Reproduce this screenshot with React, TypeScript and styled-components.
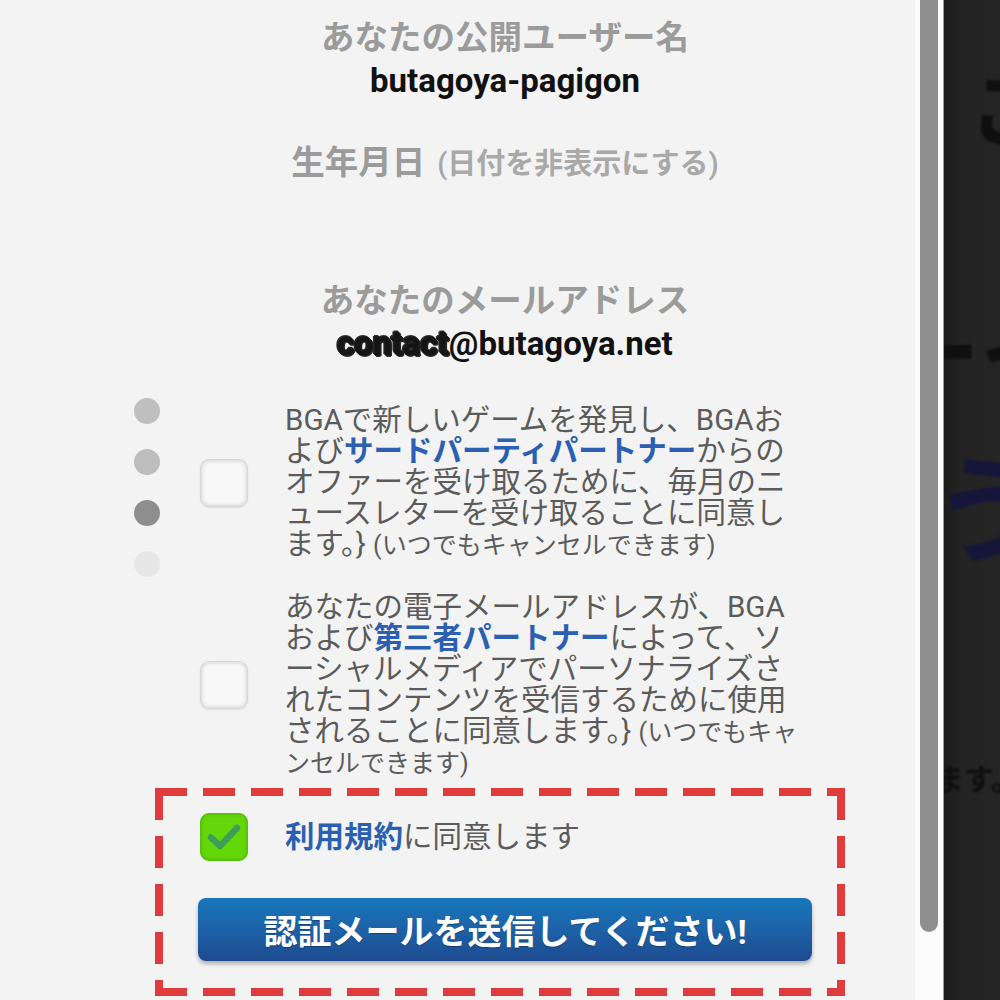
import React, { FC } from 'react';
import styled, { createGlobalStyle } from 'styled-components';

const BASE_FONT = `Roboto, "Noto Sans CJK JP", sans-serif`;

const GlobalStyle = createGlobalStyle`
    html, body {
        margin: 0;
        padding: 0;
        background: #f3f3f3;
        overflow: hidden;
    }
    body {
        font-family: ${BASE_FONT};
    }
`;

const dotShades = ['#c0c0c0', '#bdbdbd', '#8e8e8e', '#e7e7e7'];

const CheckMark: FC = () => (
    <svg width="40" height="40" viewBox="0 0 40 40">
        <path d="M7 20.5 L16 29 L33 11" fill="none" stroke="#3c9e57" strokeWidth="6.5" strokeLinecap="round" strokeLinejoin="round" />
    </svg>
);

const App: FC = () => {
    return (
        <>
            <GlobalStyle />
            <Screen>
                <Panel>
                    <PageDots>
                        {dotShades.map((shade, i) => (
                            <Dot key={i} $shade={shade} />
                        ))}
                    </PageDots>
                    <Column>
                        <FieldLabel>あなたの公開ユーザー名</FieldLabel>
                        <FieldValue>butagoya-pagigon</FieldValue>
                        <FieldLabel $gap={39}>
                            生年月日<Hint>(日付を非表示にする)</Hint>
                        </FieldLabel>
                        <FieldLabel $gap={93}>あなたのメールアドレス</FieldLabel>
                        <FieldValue>
                            <Scribble>contact</Scribble>@butagoya.net
                        </FieldValue>

                        <ConsentRow $gap={40}>
                            <CheckBox />
                            <ConsentText>
                                BGAで新しいゲームを発見し、BGAお<br />
                                よび<Link>サードパーティパートナー</Link>からの<br />
                                オファーを受け取るために、毎月のニ<br />
                                ュースレターを受け取ることに同意し<br />
                                {'ます。} '}<Aside>(いつでもキャンセルできます)</Aside>
                            </ConsentText>
                        </ConsentRow>

                        <ConsentRow $gap={32}>
                            <CheckBox />
                            <ConsentText>
                                あなたの電子メールアドレスが、BGA<br />
                                および<Link>第三者パートナー</Link>によって、ソ<br />
                                ーシャルメディアでパーソナライズさ<br />
                                れたコンテンツを受信するために使用<br />
                                {'されることに同意します。} '}<Aside>(いつでもキャ</Aside><br />
                                <Aside>ンセルできます)</Aside>
                            </ConsentText>
                        </ConsentRow>

                        <Highlight>
                            <ConsentRow>
                                <CheckBox $checked>
                                    <CheckMark />
                                </CheckBox>
                                <ConsentText>
                                    <Link>利用規約</Link>に同意します
                                </ConsentText>
                            </ConsentRow>
                            <SubmitButton>認証メールを送信してください!</SubmitButton>
                        </Highlight>
                    </Column>
                </Panel>

                <ScrollTrack>
                    <ScrollThumb />
                </ScrollTrack>

                {/* page behind the sheet, mostly hidden */}
                <Backdrop>
                    <BackdropLine $size={84} $top={70} $shift={26}>ご</BackdropLine>
                    <BackdropLine $size={92} $top={156} $shift={-56}>ーイ</BackdropLine>
                    <BackdropLine $size={116} $top={53} $shift={-12} $color="#15153a">う</BackdropLine>
                    <BackdropLine $size={30} $top={194} $shift={-10}>ます。</BackdropLine>
                </Backdrop>
            </Screen>
        </>
    );
};

const Screen = styled.div`
    display: flex;
    width: 1000px;
    height: 1000px;
    overflow: hidden;
`;

const Panel = styled.div`
    position: relative;
    width: 915px;
    flex-shrink: 0;
    background: #f3f3f3;
`;

const PageDots = styled.div`
    position: absolute;
    left: 134px;
    top: 398px;
    display: flex;
    flex-direction: column;
    gap: 25px;
`;

const Dot = styled.div<{ $shade: string }>`
    width: 26px;
    height: 26px;
    border-radius: 50%;
    background: ${(p) => p.$shade};
`;

const Column = styled.div`
    margin-left: 198px;
    width: 614px;
    padding-top: 16px;
    display: flex;
    flex-direction: column;
`;

const FieldLabel = styled.div<{ $gap?: number }>`
    margin-top: ${(p) => p.$gap ?? 0}px;
    text-align: center;
    font-size: 33.5px;
    line-height: 43px;
    font-weight: 700;
    color: #9b9b9b;
    white-space: nowrap;
`;

const Hint = styled.span`
    margin-left: 12px;
    font-size: 29px;
    font-weight: 600;
    color: #a9a9a9;
`;

const FieldValue = styled.div`
    text-align: center;
    font-size: 33px;
    line-height: 43px;
    font-weight: 700;
    color: #111;
`;

const Scribble = styled.span`
    color: #151515;
    text-shadow: 1px 0 #1c1c1c, -1px 0 #1c1c1c, 0 1px #1c1c1c, 0 -1px #1c1c1c,
        2px 1px #2a2a2a, -2px -1px #2a2a2a, 1px 2px #333, -1px -2px #333;
    filter: blur(0.6px);
`;

const ConsentRow = styled.div<{ $gap?: number }>`
    margin-top: ${(p) => p.$gap ?? 0}px;
    display: flex;
    align-items: center;
    gap: 37px;
`;

const CheckBox = styled.div<{ $checked?: boolean }>`
    width: 48px;
    height: 48px;
    margin-left: 2px;
    flex-shrink: 0;
    box-sizing: border-box;
    border-radius: 9px;
    display: flex;
    align-items: center;
    justify-content: center;
    background: ${(p) => (p.$checked ? '#63d70a' : '#f8f8f8')};
    border: 1px solid ${(p) => (p.$checked ? '#55c012' : '#d6d6d6')};
    box-shadow: ${(p) =>
        p.$checked
            ? 'inset 0 0 3px rgba(40, 120, 0, 0.5)'
            : 'inset 0 0 4px 1px rgba(0, 0, 0, 0.14), 0 1px 2px rgba(0, 0, 0, 0.08)'};
`;

const ConsentText = styled.div`
    font-size: 29.5px;
    line-height: 31px;
    color: #5b5b5b;
    white-space: nowrap;
`;

const Link = styled.span`
    color: #2a5fb2;
    font-weight: 700;
`;

const Aside = styled.span`
    font-size: 25px;
    line-height: 20px;
`;

const Highlight = styled.div`
    margin-top: 10px;
    margin-left: -43px;
    width: 690px;
    box-sizing: border-box;
    padding: 25px 33px 35px 43px;
    display: flex;
    flex-direction: column;
    gap: 37px;
    background:
        repeating-linear-gradient(90deg, #e13c3c 0 32px, transparent 32px 48px) left top / 100% 8px no-repeat,
        repeating-linear-gradient(90deg, #e13c3c 0 32px, transparent 32px 48px) left bottom / 100% 8px no-repeat,
        repeating-linear-gradient(180deg, #e13c3c 0 32px, transparent 32px 48px) left top / 8px 100% no-repeat,
        repeating-linear-gradient(180deg, #e13c3c 0 32px, transparent 32px 48px) right top / 8px 100% no-repeat;
`;

const SubmitButton = styled.button`
    width: 614px;
    height: 63px;
    border: none;
    border-radius: 8px;
    background: linear-gradient(180deg, #1876bb 0%, #1d62a8 50%, #1d4b90 100%);
    box-shadow: 0 3px 4px rgba(0, 0, 0, 0.28);
    color: #fff;
    font-family: ${BASE_FONT};
    font-size: 34px;
    font-weight: 700;
    text-shadow: 0 1px 1px rgba(0, 0, 0, 0.3);
    cursor: pointer;
`;

const ScrollTrack = styled.div`
    width: 29px;
    flex-shrink: 0;
    background: #fcfcfc;
    border-right: 1px solid #9a9a9a;
    padding-left: 5px;
    box-sizing: border-box;
`;

const ScrollThumb = styled.div`
    width: 18px;
    height: 932px;
    background: #8f8f8f;
    border-radius: 0 0 9px 9px;
`;

const Backdrop = styled.div`
    flex: 1;
    display: flex;
    flex-direction: column;
    overflow: hidden;
    background: linear-gradient(90deg, #1b1b1b 0%, #242424 30%, #252525 100%);
`;

const BackdropLine = styled.div<{ $size: number; $top: number; $shift: number; $color?: string }>`
    margin-top: ${(p) => p.$top}px;
    margin-left: ${(p) => p.$shift}px;
    font-size: ${(p) => p.$size}px;
    line-height: 1;
    font-weight: 700;
    white-space: nowrap;
    color: ${(p) => p.$color ?? '#0f0f0f'};
    filter: blur(1.2px);
`;

export default App;
